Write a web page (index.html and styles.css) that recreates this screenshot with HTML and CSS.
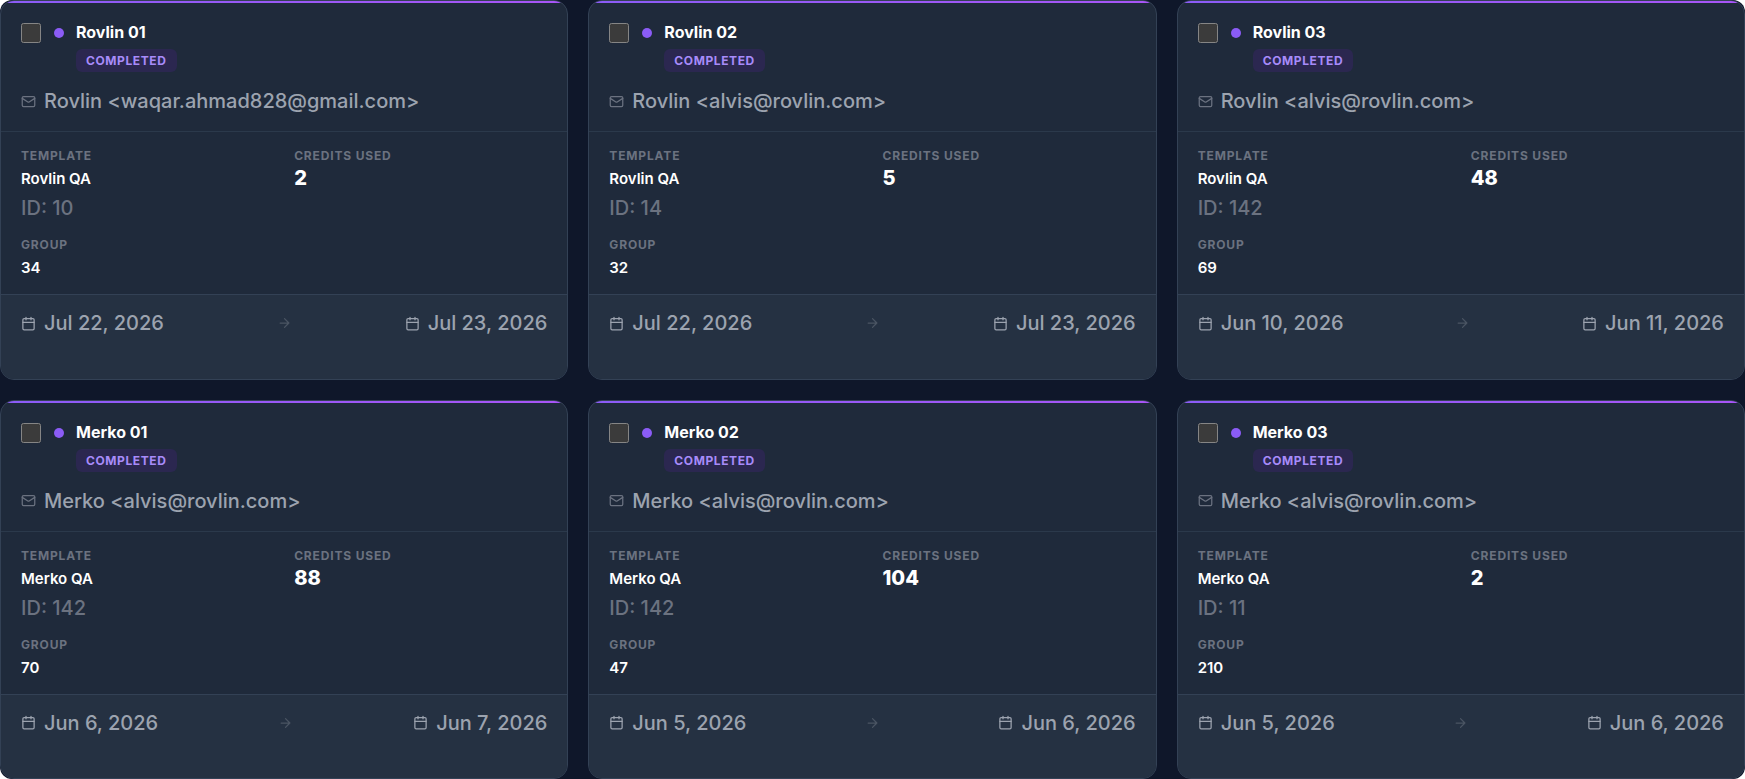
FILE: index.html
```html
<!DOCTYPE html>
<html lang="en">
	<head>
		<meta charset="UTF-8">
		<title>Campaigns</title>
		<link rel="stylesheet" href="styles.css">
	</head>
	<body>

		<!-- icons shared by all cards -->
		<svg class="sprite" aria-hidden="true">
			<symbol id="icon-mail" viewBox="0 0 24 24">
				<rect x="2" y="4" width="20" height="16" rx="2"/>
				<path d="m22 7-8.97 5.7a1.94 1.94 0 0 1-2.06 0L2 7"/>
			</symbol>
			<symbol id="icon-calendar" viewBox="0 0 24 24">
				<rect x="3" y="4" width="18" height="18" rx="2"/>
				<path d="M8 2v4M16 2v4M3 10h18"/>
			</symbol>
			<symbol id="icon-arrow" viewBox="0 0 24 24">
				<path d="M5 12h14M12 5l7 7-7 7"/>
			</symbol>
		</svg>

		<main class="card-grid" id="cardGrid"></main>

		<!-- one campaign card -->
		<template id="cardTemplate">
			<article class="card">
				<header class="card-header">
					<div class="card-top">
						<input class="card-check" type="checkbox">
						<span class="status-dot"></span>
						<div class="card-heading">
							<h2 class="card-title" data-field="title"></h2>
							<span class="badge">Completed</span>
						</div>
					</div>
					<div class="sender">
						<svg class="icon"><use href="#icon-mail"/></svg>
						<span data-field="sender"></span>
					</div>
				</header>
				<dl class="card-body">
					<div class="field">
						<dt>Template</dt>
						<dd data-field="template"></dd>
						<dd class="field-id" data-field="id"></dd>
					</div>
					<div class="field">
						<dt>Credits used</dt>
						<dd class="credits" data-field="credits"></dd>
					</div>
					<div class="field">
						<dt>Group</dt>
						<dd data-field="group"></dd>
					</div>
				</dl>
				<footer class="card-footer">
					<span class="date"><svg class="icon"><use href="#icon-calendar"/></svg><time data-field="start"></time></span>
					<svg class="icon arrow"><use href="#icon-arrow"/></svg>
					<span class="date"><svg class="icon"><use href="#icon-calendar"/></svg><time data-field="end"></time></span>
				</footer>
			</article>
		</template>

		<script src="cards.js"></script>
	</body>
</html>
```

FILE: styles.css
```css
*{
	box-sizing: border-box;
	margin: 0;
	padding: 0;
}

body{
	background-color: #fff;
	color: #fff;
	font-family: Inter, "Liberation Sans", sans-serif;
}

.sprite{
	display: none;
}

/* grid of cards */
.card-grid{
	display: grid;
	grid-template-columns: repeat(3, 1fr);
	grid-auto-rows: 1fr;
	gap: 20px;
	min-height: 100vh;
	background-color: #0f172a;
	border-radius: 12px;
}

.card{
	position: relative;
	display: flex;
	flex-direction: column;
	overflow: hidden;
	background-color: #1f2a3b;
	border: 1px solid #334155;
	border-radius: 14px;
}

/* accent line on top of the card */
.card::before{
	content: "";
	position: absolute;
	top: 0;
	left: 0;
	right: 0;
	height: 2px;
	background: linear-gradient(90deg, #8b5cf6, #a855f7);
}

/* header */
.card-header{
	padding: 20px 20px 15px;
	border-bottom: 1px solid #2b394b;
}

.card-top{
	display: flex;
	align-items: flex-start;
	margin-bottom: 14px;
}

.card-check{
	width: 20px;
	height: 20px;
	margin: 2px 13px 0 0;
	color-scheme: dark;
}

.status-dot{
	width: 10px;
	height: 10px;
	margin: 7px 12px 0 0;
	border-radius: 50%;
	background-color: #8b5cf6;
}

.card-title{
	margin-bottom: 6px;
	font-size: 16px;
	font-weight: 700;
	line-height: 22px;
}

.badge{
	display: block;
	width: fit-content;
	padding: 4px 10px;
	border-radius: 6px;
	background-color: #2b2750;
	color: #a78bfa;
	font-size: 12px;
	font-weight: 700;
	line-height: 15px;
	letter-spacing: 0.05em;
	text-transform: uppercase;
}

.sender{
	display: flex;
	align-items: center;
	gap: 8px;
	color: #9ca3af;
	font-size: 20px;
	font-weight: 500;
	line-height: 30px;
}

.icon{
	flex: none;
	width: 15px;
	height: 15px;
	fill: none;
	stroke: currentColor;
	stroke-width: 2;
	stroke-linecap: round;
	stroke-linejoin: round;
}

.sender .icon{
	color: #6b7280;
}

/* template, credits and group */
.card-body{
	display: grid;
	grid-template-columns: 1fr 1fr;
	gap: 13px 20px;
	padding: 16px 20px 12px;
}

.field dt{
	color: #6b7280;
	font-size: 12px;
	font-weight: 700;
	line-height: 16px;
	letter-spacing: 0.07em;
	text-transform: uppercase;
}

.field dd{
	font-size: 15px;
	font-weight: 600;
	line-height: 29px;
}

.field .field-id{
	color: #6b7280;
	font-size: 20px;
	font-weight: 500;
	line-height: 31px;
}

.field .credits{
	font-size: 20px;
	font-weight: 800;
}

/* dates */
.card-footer{
	display: flex;
	flex: 1;
	align-items: flex-start;
	justify-content: space-between;
	padding: 13px 20px;
	border-top: 1px solid #334155;
	background-color: #253142;
}

.date{
	display: flex;
	align-items: center;
	gap: 8px;
	color: #9ca3af;
	font-size: 20px;
	font-weight: 500;
	line-height: 30px;
}

.arrow{
	height: 30px;
	color: #4b5563;
}
```

FILE: cards.js
```js
var cards = [
	{title: "Rovlin 01", sender: "Rovlin <waqar.ahmad828@gmail.com>", template: "Rovlin QA", id: "ID: 10", credits: "2", group: "34", start: "Jul 22, 2026", end: "Jul 23, 2026"},
	{title: "Rovlin 02", sender: "Rovlin <alvis@rovlin.com>", template: "Rovlin QA", id: "ID: 14", credits: "5", group: "32", start: "Jul 22, 2026", end: "Jul 23, 2026"},
	{title: "Rovlin 03", sender: "Rovlin <alvis@rovlin.com>", template: "Rovlin QA", id: "ID: 142", credits: "48", group: "69", start: "Jun 10, 2026", end: "Jun 11, 2026"},
	{title: "Merko 01", sender: "Merko <alvis@rovlin.com>", template: "Merko QA", id: "ID: 142", credits: "88", group: "70", start: "Jun 6, 2026", end: "Jun 7, 2026"},
	{title: "Merko 02", sender: "Merko <alvis@rovlin.com>", template: "Merko QA", id: "ID: 142", credits: "104", group: "47", start: "Jun 5, 2026", end: "Jun 6, 2026"},
	{title: "Merko 03", sender: "Merko <alvis@rovlin.com>", template: "Merko QA", id: "ID: 11", credits: "2", group: "210", start: "Jun 5, 2026", end: "Jun 6, 2026"}
];

var cardGrid = document.getElementById("cardGrid");
var cardTemplate = document.getElementById("cardTemplate");

for(var i=0 ; i<cards.length ; i++){
	var card = cardTemplate.content.cloneNode(true);
	var fields = card.querySelectorAll("[data-field]");

	for(var j=0 ; j<fields.length ; j++){
		fields[j].textContent = cards[i][fields[j].getAttribute("data-field")];
	}

	//tie the checkbox to the card title
	card.querySelector(".card-title").id = "card-title-" + i;
	card.querySelector(".card-check").setAttribute("aria-labelledby", "card-title-" + i);

	cardGrid.appendChild(card);
}
```
